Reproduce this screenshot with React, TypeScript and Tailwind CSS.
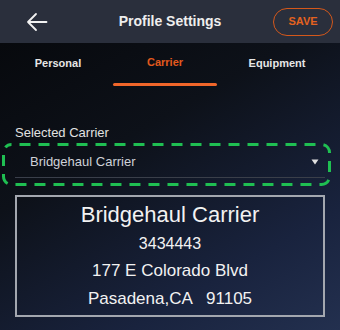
import React from "react";

export default function App() {
  return (
    <div
      className="w-[340px] h-[330px] overflow-hidden flex flex-col text-white"
      style={{ fontFamily: '"Liberation Sans", Arial, sans-serif' }}
    >
      {/* Header */}
      <div className="h-[43px] bg-[#2a2f3c] grid grid-cols-[1fr_auto_1fr] items-center shrink-0">
        <div className="pl-[26px] flex items-center">
          <svg width="22" height="20" viewBox="0 0 22 20">
            <path d="M20.5 10H2M10 2L2 10l8 8" fill="none" stroke="#f2f2f2" strokeWidth="1.8" strokeLinecap="round" strokeLinejoin="round" />
          </svg>
        </div>
        <div className="text-center text-[14px] font-bold text-[#eeeeee]">Profile Settings</div>
        <div className="flex justify-end pr-[7px]">
          <div className="w-[60px] h-[28px] rounded-full border border-[#d4581b] flex items-center justify-center text-[11px] font-bold text-[#e4621f]">
            SAVE
          </div>
        </div>
      </div>
      {/* Body */}
      <div className="flex-1 flex flex-col bg-[linear-gradient(150deg,#07090d_0%,#0d1119_35%,#19233e_75%,#23304f_100%)]">
        {/* Tabs */}
        <div className="flex h-[43px] items-stretch text-[11px] font-bold">
          <div className="w-[113px] flex items-center justify-center text-[#e6e6e6] pl-[3px] pb-[3px]">Personal</div>
          <div className="w-[104px] flex flex-col items-center justify-center relative text-[#e2591d]">
            <span className="pb-[4px]">Carrier</span>
            <div className="absolute bottom-[0px] left-0 right-0 h-[3px] bg-[#f0662a] rounded-full" />
          </div>
          <div className="flex-1 flex items-center justify-center text-[#e6e6e6] pr-[3px] pb-[3px]">Equipment</div>
        </div>
        {/* Selected carrier */}
        <div className="px-[15px] pt-[39px] relative">
          <div className="text-[13px] text-[#e2e2e2] leading-[15px]">Selected Carrier</div>
          <div className="h-[34px] mt-[4px] flex items-center pl-[15px] pr-[6px] pt-[3px] border-b border-[#3a3f4a] text-[13px] text-[#cfd2d8]">
            <span className="flex-1">Bridgehaul Carrier</span>
            <svg width="8" height="6" viewBox="0 0 8 6"><path d="M0.5 0.5h7L4 5.5z" fill="#e0e0e0" /></svg>
          </div>
          <svg className="absolute left-[2px] top-[57px]" width="329" height="43" viewBox="0 0 329 43">
            <rect x="1.5" y="1.5" width="326" height="40" rx="8" fill="none" stroke="#1fbf52" strokeWidth="3" strokeDasharray="11 8" strokeDashoffset="-8" />
          </svg>
        </div>
        {/* Card */}
        <div className="mx-[15px] mt-[17px] h-[122px] border-2 border-[#a3a7af] flex flex-col items-center text-[#f2f2f2]">
          <div className="text-[22px] leading-[26px] mt-[5px]">Bridgehaul Carrier</div>
          <div className="text-[16px] leading-[18px] mt-[7px]">3434443</div>
          <div className="text-[17px] leading-[20px] mt-[8px]">177 E Colorado Blvd</div>
          <div className="text-[17px] leading-[20px] mt-[8px] whitespace-pre">Pasadena,CA   91105</div>
        </div>
      </div>
    </div>
  );
}
